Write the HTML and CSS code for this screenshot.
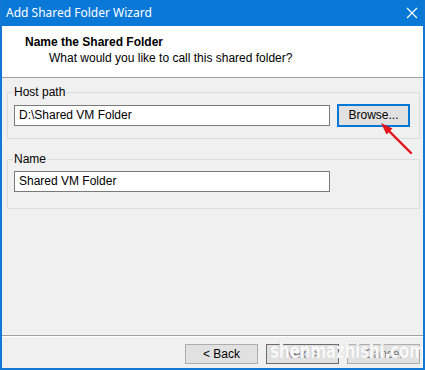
FILE: index.html
```html
<!DOCTYPE html>
<html>
<head>
<meta charset="utf-8">
<link rel="stylesheet" href="styles.css">
</head>
<body>
<div class="window">
  <div class="titlebar">
    <span class="title">Add Shared Folder Wizard</span>
    <svg class="close" width="12" height="12" viewBox="0 0 12 12"><path d="M1 1L11 11M11 1L1 11" stroke="#fff" stroke-width="1.2" fill="none"/></svg>
  </div>
  <div class="header">
    <div class="heading">Name the Shared Folder</div>
    <div class="subheading">What would you like to call this shared folder?</div>
  </div>
  <div class="content">
    <fieldset class="group group-host">
      <legend>Host path</legend>
      <div class="row">
        <div class="input">D:\Shared VM Folder</div>
        <div class="btn btn-focus">Browse...</div>
      </div>
    </fieldset>
    <fieldset class="group group-name">
      <legend>Name</legend>
      <div class="row">
        <div class="input">Shared VM Folder</div>
      </div>
    </fieldset>
  </div>
  <div class="footer">
    <div class="btn btn-foot">&lt; Back</div>
    <div class="btn btn-foot btn-default">Next &gt;</div>
    <div class="btn btn-foot">Cancel</div>
  </div>
  <svg class="arrow" width="40" height="40" viewBox="0 0 40 40">
    <path d="M34 33L11 10" stroke="#e3121b" stroke-width="2.4" fill="none" stroke-linecap="round"/>
    <path d="M4 3L15.5 8.5L9.5 14.5Z" fill="#e3121b"/>
  </svg>
  <div class="watermark">shenmazhishi.com</div>
</div>
</body>
</html>
```
FILE: styles.css
```css
html, body {
  margin: 0;
  padding: 0;
  background: #f0f0f0;
}
.window {
  position: relative;
  width: 425px;
  height: 370px;
  box-sizing: border-box;
  border: 2px solid #1378d3;
  border-top: none;
  display: flex;
  flex-direction: column;
  font-family: "Liberation Sans", Arial, sans-serif;
  font-size: 12px;
  color: #000;
  background: #f0f0f0;
  overflow: hidden;
}
.titlebar {
  height: 26px;
  margin: 0 -2px;
  background: #0a78d7;
  display: flex;
  align-items: center;
  justify-content: space-between;
  padding: 0 7px 0 6px;
  flex: none;
}
.title {
  color: #fff;
  font-family: "Noto Sans", "Liberation Sans", sans-serif;
  font-size: 12px;
  line-height: 14px;
}
.close {
  display: block;
}
.header {
  height: 52px;
  background: #fff;
  border-bottom: 1px solid #a0a0a0;
  padding: 8px 0 0 23px;
  box-sizing: border-box;
  flex: none;
}
.heading {
  font-weight: bold;
  line-height: 16px;
}
.subheading {
  padding-left: 24px;
  line-height: 16px;
}
.content {
  flex: 1;
  padding: 7px 3px 0 5px;
  display: flex;
  flex-direction: column;
  gap: 13px;
}
.group {
  margin: 0;
  border: 1px solid #dcdcdc;
  padding: 5px 6px 11px 6px;
  min-width: 0;
}
.group-name {
  padding-bottom: 16px;
}
.group legend {
  padding: 0 1px;
  margin-left: -1px;
  line-height: 14px;
  color: #000;
}
.row {
  display: flex;
  align-items: center;
  gap: 7px;
}
.input {
  width: 316px;
  height: 21px;
  box-sizing: border-box;
  border: 1px solid #7a7a7a;
  background: #fff;
  padding-left: 4px;
  line-height: 19px;
  white-space: nowrap;
}
.btn {
  box-sizing: border-box;
  background: #e1e1e1;
  border: 1px solid #adadad;
  text-align: center;
  white-space: nowrap;
}
.btn-focus {
  width: 73px;
  height: 23px;
  border: 2px solid #0078d7;
  line-height: 19px;
}
.footer {
  flex: none;
  height: 33px;
  border-top: 1px solid #a0a0a0;
  box-shadow: inset 0 1px 0 #fff;
  box-sizing: border-box;
  display: flex;
  justify-content: flex-end;
  gap: 8px;
  padding: 8px 3px 0 0;
}
.btn-foot {
  width: 73px;
  height: 20px;
  line-height: 18px;
}
.btn-default {
  border-color: #6b6b6b;
  color: #6a6a6a;
}
.footer .btn-foot:last-child {
  color: #777;
}
.arrow {
  position: absolute;
  left: 375px;
  top: 120px;
}
.watermark {
  position: absolute;
  left: 268px;
  top: 338px;
  font-family: "DejaVu Sans", sans-serif;
  font-weight: bold;
  font-size: 22px;
  color: rgba(255, 255, 255, 0.93);
  text-shadow: 0 0 1px #bbb;
  transform: scaleX(0.7);
  transform-origin: left top;
  letter-spacing: -0.5px;
  white-space: nowrap;
}
```
